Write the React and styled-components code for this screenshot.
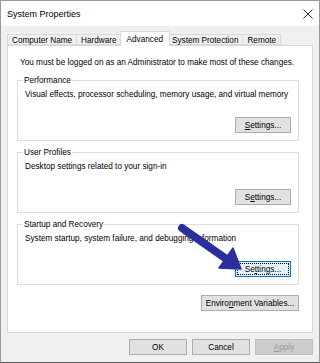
import React from 'react';
import styled, { createGlobalStyle } from 'styled-components';

const GlobalStyle = createGlobalStyle`
	html, body {
		margin: 0;
		padding: 0;
		background: #ffffff;
	}
	* {
		box-sizing: border-box;
	}
`;

const Window = styled.div`
	position: relative;
	width: 320px;
	height: 363px;
	border: 1px solid #9a9a9a;
	border-bottom-color: #5a5a5a;
	background: #f0f0f0;
	font-family: 'Liberation Sans', Arial, sans-serif;
	font-size: 8.2px;
	color: #000;
	display: flex;
	flex-direction: column;
	overflow: hidden;
`;

const TitleBar = styled.div`
	height: 25px;
	background: #ffffff;
	display: flex;
	align-items: center;
	justify-content: space-between;
	padding: 0 6px 0 6px;
`;

const Title = styled.span`
	font-size: 9px;
	color: #000;
`;

const Body = styled.div`
	flex: 1;
	padding: 5px 6px 0 6px;
	display: flex;
	flex-direction: column;
`;

const TabStrip = styled.div`
	display: flex;
	align-items: flex-end;
	height: 14px;
	position: relative;
	z-index: 1;
`;

const Tab = styled.div`
	height: ${(p) => (p.$active ? '15px' : '11px')};
	margin: ${(p) => (p.$active ? '0 -2px -1px -2px' : '0')};
	padding: 0 ${(p) => (p.$active ? '6px' : '4px')};
	background: ${(p) => (p.$active ? '#ffffff' : '#f0f0f0')};
	border: 1px solid #d9d9d9;
	border-bottom: ${(p) => (p.$active ? 'none' : '1px solid #d9d9d9')};
	border-left: ${(p) => (p.$first || p.$active ? '1px solid #d9d9d9' : 'none')};
	display: flex;
	align-items: center;
	white-space: nowrap;
	position: relative;
	z-index: ${(p) => (p.$active ? 2 : 1)};
	line-height: 11px;
	padding-top: ${(p) => (p.$active ? '0' : '1px')};
`;

const Panel = styled.div`
	height: 288px;
	background: #ffffff;
	border: 1px solid #d9d9d9;
	padding: 11px 13px 0 9px;
	display: flex;
	flex-direction: column;
`;

const Intro = styled.p`
	margin: 0 0 6px 3px;
	line-height: 12px;
	white-space: nowrap;
`;

const Group = styled.fieldset`
	margin: 0 0 6px 0;
	padding: 0 7px 7px 7px;
	border: 1px solid #dcdcdc;
	min-width: 0;
	display: flex;
	flex-direction: column;
`;

const Legend = styled.legend`
	padding: 0 1px;
	margin-left: -2px;
	line-height: 11px;
	color: #000;
`;

const Desc = styled.div`
	margin-top: 3px;
	line-height: 12px;
	white-space: nowrap;
`;

const ButtonRow = styled.div`
	display: flex;
	justify-content: flex-end;
	gap: 5px;
	margin-top: ${(p) => p.$top || 0}px;
`;

const Button = styled.button`
	width: ${(p) => p.$w || 58}px;
	height: 16px;
	padding: 0;
	margin: 0;
	font-family: inherit;
	font-size: 8.2px;
	color: ${(p) => (p.disabled ? '#9a9a9a' : '#000')};
	background: ${(p) => (p.disabled ? '#cccccc' : p.$focus ? '#e5f1fb' : '#e1e1e1')};
	border: 1px solid ${(p) => (p.disabled ? '#bfbfbf' : p.$focus ? '#0078d7' : '#adadad')};
	display: flex;
	align-items: center;
	justify-content: center;
	position: relative;
	cursor: default;
	outline: ${(p) => (p.$focus ? '1px dotted #000' : 'none')};
	outline-offset: -3px;
`;

const Key = styled.u`
	text-decoration-thickness: 1px;
	text-underline-offset: 1px;
`;

const Arrow = styled.svg`
	position: absolute;
	left: 0;
	top: 0;
	pointer-events: none;
	z-index: 5;
`;

function CloseIcon() {
	return (
		<svg width="10" height="10" viewBox="0 0 10 10">
			<path d="M0.5 0.5 L9.5 9.5 M9.5 0.5 L0.5 9.5" stroke="#222" strokeWidth="1" fill="none" />
		</svg>
	);
}

const tabs = ['Computer Name', 'Hardware', 'Advanced', 'System Protection', 'Remote'];

const groups = [
	{
		title: 'Performance',
		desc: 'Visual effects, processor scheduling, memory usage, and virtual memory',
		key: 0,
	},
	{
		title: 'User Profiles',
		desc: 'Desktop settings related to your sign-in',
		key: 1,
	},
	{
		title: 'Startup and Recovery',
		desc: 'System startup, system failure, and debugging information',
		key: 2,
		focus: true,
	},
];

function SettingsLabel({ at }) {
	const word = 'Settings...';
	return (
		<span>
			{word.slice(0, at)}
			<Key>{word[at]}</Key>
			{word.slice(at + 1)}
		</span>
	);
}

export default function App() {
	return (
		<>
			<GlobalStyle />
			<Window>
				<TitleBar>
					<Title>System Properties</Title>
					<CloseIcon />
				</TitleBar>
				<Body>
					<TabStrip>
						{tabs.map((t, i) => (
							<Tab key={t} $first={i === 0} $active={t === 'Advanced'}>
								{t}
							</Tab>
						))}
					</TabStrip>
					<Panel>
						<Intro>You must be logged on as an Administrator to make most of these changes.</Intro>
						{groups.map((g) => (
							<Group key={g.title}>
								<Legend>{g.title}</Legend>
								<Desc>{g.desc}</Desc>
								<ButtonRow $top={16}>
									<Button $w={56} $focus={g.focus}>
										<SettingsLabel at={g.key} />
									</Button>
								</ButtonRow>
							</Group>
						))}
						<ButtonRow $top={4}>
							<Button $w={98}>
								<span>
									Enviro<Key>n</Key>ment Variables...
								</span>
							</Button>
						</ButtonRow>
					</Panel>
					<ButtonRow $top={6}>
						<Button>OK</Button>
						<Button>Cancel</Button>
						<Button disabled>
							<span>
								<Key>A</Key>pply
							</span>
						</Button>
					</ButtonRow>
				</Body>
				<Arrow width="320" height="363" viewBox="0 0 320 363">
					<line x1="181" y1="227" x2="224" y2="257" stroke="#2b2f9e" strokeWidth="8" strokeLinecap="round" />
					<polygon points="240,268 218,267 232,247" fill="#2b2f9e" stroke="#2b2f9e" strokeWidth="1.5" strokeLinejoin="round" />
				</Arrow>
			</Window>
		</>
	);
}
